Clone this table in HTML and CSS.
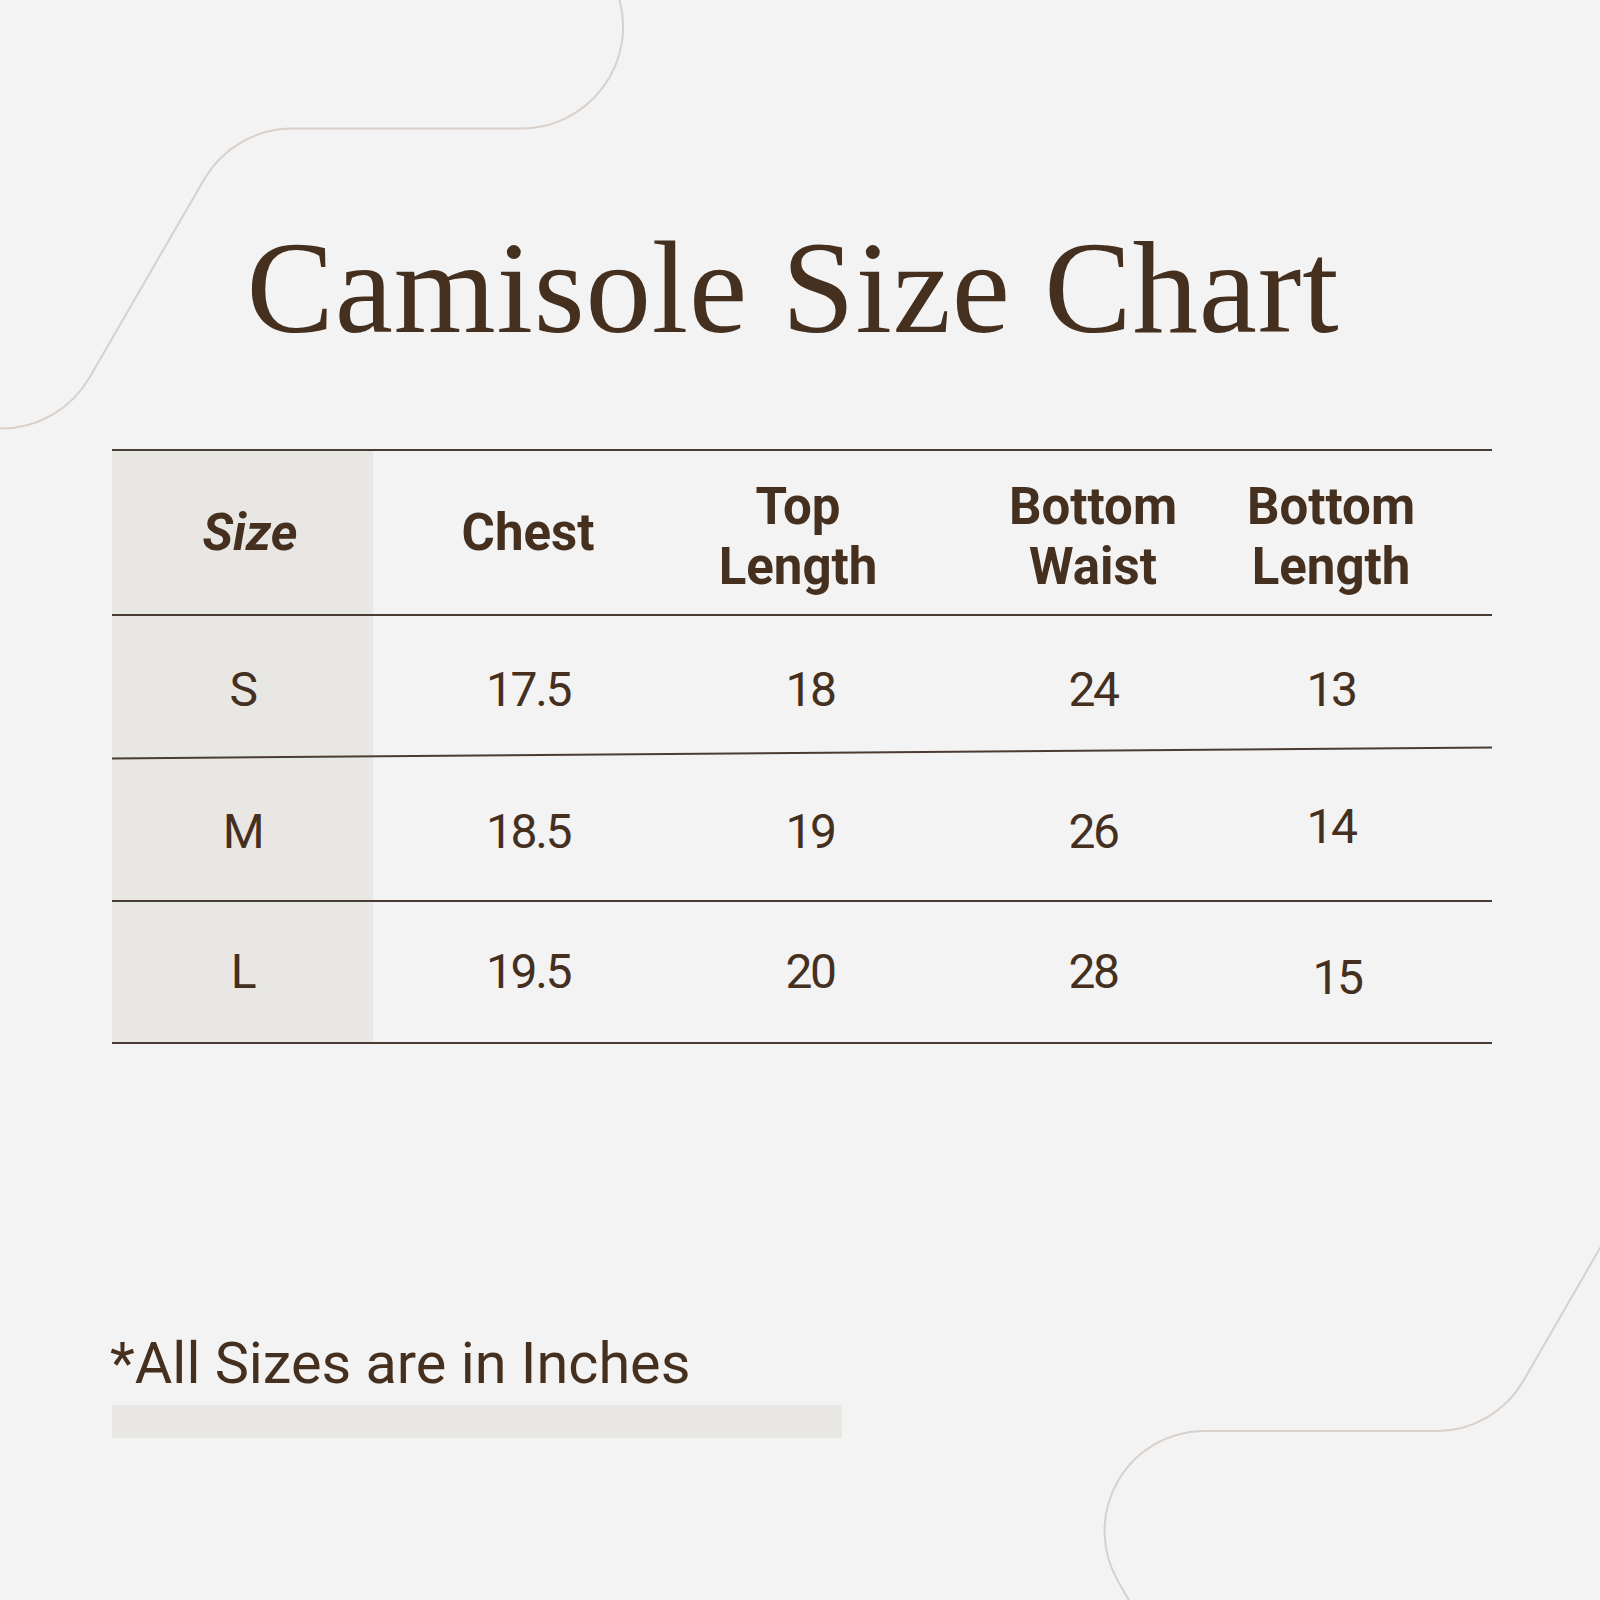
FILE: index.html
```html
<!DOCTYPE html>
<html lang="en">
<head>
<meta charset="utf-8">
<title>Camisole Size Chart</title>
<link rel="stylesheet" href="styles.css">
</head>
<body>
<div class="page">
  <svg class="deco" viewBox="0 0 1600 1600" width="1600" height="1600" aria-hidden="true">
    <path d="M 619 -2 A 102 102 0 0 1 520 128.6 L 291 128.6 A 102 102 0 0 0 204.5 178.7 L 89.5 377.5 A 102 102 0 0 1 1 428.6 L -10 428.6" />
    <path d="M 1611 1229 L 1523.3 1381 A 100 100 0 0 1 1436.7 1431 L 1204 1431 A 100 100 0 0 0 1117.4 1580 L 1135 1611" />
  </svg>

  <h1 class="title">Camisole Size Chart</h1>

  <div class="chart">
    <div class="row head">
      <div class="cell first size-head">Size</div>
      <div class="cell">Chest</div>
      <div class="cell two top-len">Top<br>Length</div>
      <div class="cell two">Bottom<br>Waist</div>
      <div class="cell two last">Bottom<br>Length</div>
    </div>
    <div class="row data row-s">
      <div class="cell first">S</div>
      <div class="cell">17.5</div>
      <div class="cell">18</div>
      <div class="cell">24</div>
      <div class="cell last">13</div>
    </div>
    <div class="row data row-m">
      <div class="cell first">M</div>
      <div class="cell">18.5</div>
      <div class="cell">19</div>
      <div class="cell">26</div>
      <div class="cell last up">14</div>
    </div>
    <div class="row data row-l">
      <div class="cell first">L</div>
      <div class="cell">19.5</div>
      <div class="cell">20</div>
      <div class="cell">28</div>
      <div class="cell last down">15</div>
    </div>
  </div>

  <p class="note">*All Sizes are in Inches</p>
  <div class="bar"></div>
</div>
</body>
</html>
```

FILE: styles.css
```css
html, body {
  margin: 0;
  padding: 0;
  background: #f3f3f3;
}

.page {
  position: relative;
  width: 1600px;
  height: 1600px;
  overflow: hidden;
  background: #f3f3f3;
  color: #45301f;
}

.deco {
  position: absolute;
  left: 0;
  top: 0;
  pointer-events: none;
}

.deco path {
  fill: none;
  stroke: #d9d0c9;
  stroke-width: 2;
}

.title {
  position: relative;
  margin: 0;
  padding: 213px 14px 0 0;
  font-family: "Liberation Serif", "Times New Roman", serif;
  font-weight: 400;
  font-size: 131px;
  line-height: 150px;
  letter-spacing: 0.85px;
  text-align: center;
  color: #45301f;
}

.chart {
  position: relative;
  margin: 86px 0 0 112px;
  width: 1380px;
  border-top: 2px solid #4a3c32;
}

.row {
  display: grid;
  grid-template-columns: 261px 310px 254px 312px 243px;
  border-bottom: 2px solid #4a3c32;
}

.cell {
  display: flex;
  align-items: center;
  justify-content: center;
  text-align: center;
  box-sizing: border-box;
}

.cell.first {
  background: #e8e7e3;
}

.cell.last {
  padding-right: 79px;
}

.head {
  height: 163px;
  font-family: Roboto, "Liberation Sans", sans-serif;
  font-weight: 700;
  font-size: 51px;
  line-height: 60px;
}

.head .two {
  padding-top: 9px;
}

.head .top-len {
  padding-right: 24px;
}

.head .last {
  padding-right: 79px;
}

.size-head {
  font-style: italic;
  padding-left: 15px;
}

.data {
  font-family: Roboto, "Liberation Sans", sans-serif;
  font-weight: 400;
  font-size: 48px;
  line-height: 56px;
  letter-spacing: -2.4px;
}

.row-s {
  height: 138px;
  border-bottom: none;
  position: relative;
}

.row-s .cell {
  padding-top: 10px;
}

.row-s .cell.last {
  padding-right: 79px;
}

.row-s::after {
  content: "";
  position: absolute;
  left: 0;
  right: 0;
  bottom: 0;
  height: 2px;
  background: #4a3c32;
  transform: rotate(-0.456deg);
  transform-origin: center;
}

.row-m {
  height: 146px;
}

.row-m .cell {
  padding-top: 9px;
}

.row-m .cell.up {
  padding-top: 0;
  padding-bottom: 0;
}

.row-l {
  height: 140px;
}

.row-l .cell.down {
  padding-top: 12px;
  padding-left: 12px;
  padding-right: 79px;
}

.note {
  position: relative;
  margin: 286px 0 0 110px;
  font-family: Roboto, "Liberation Sans", sans-serif;
  font-weight: 400;
  font-size: 57.6px;
  line-height: 68px;
  color: #45301f;
}

.bar {
  position: relative;
  margin: 7px 0 0 112px;
  width: 730px;
  height: 33px;
  background: #e8e7e3;
}
```
